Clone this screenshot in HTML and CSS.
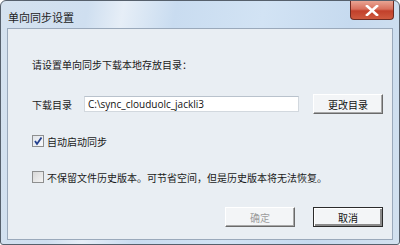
FILE: index.html
```html
<!DOCTYPE html>
<html>
    <head>
        <meta charset="utf-8" >
        <title>单向同步设置</title>
        <link rel="stylesheet" href="styles.css">
    </head>
    <body>
        <div class="window">
            <div class="titlebar">
                <span class="title">单向同步设置</span>
                <div class="close">
                    <svg width="14" height="11" viewBox="0 0 14 11"><path d="M2 1 L12 10 M12 1 L2 10" stroke="#fff" stroke-width="2.6" stroke-linecap="square"/></svg>
                </div>
            </div>
            <div class="client">
                <div class="prompt">请设置单向同步下载本地存放目录：</div>
                <div class="dir-row">
                    <span class="dir-label">下载目录</span>
                    <div class="dir-input">C:\sync_clouduolc_jackli3</div>
                    <button class="btn">更改目录</button>
                </div>
                <label class="check-row first">
                    <span class="check checked">
                        <svg width="10" height="10" viewBox="0 0 10 10"><path d="M2 5 L4 8 L8.5 1.5" stroke="#23408e" stroke-width="1.8" fill="none"/></svg>
                    </span>
                    <span>自动启动同步</span>
                </label>
                <label class="check-row second">
                    <span class="check"></span>
                    <span>不保留文件历史版本。可节省空间，但是历史版本将无法恢复。</span>
                </label>
                <div class="footer">
                    <button class="btn disabled">确定</button>
                    <button class="btn default">取消</button>
                </div>
            </div>
        </div>
    </body>
</html>
```

FILE: styles.css
```css
body {
    margin: 0;
    background-color: #ffffff;
}
.window {
    width: 400px;
    height: 245px;
    box-sizing: border-box;
    border: 1px solid #56606c;
    border-radius: 6px 6px 3px 3px;
    padding: 0 6px 4px 6px;
    display: flex;
    flex-direction: column;
    background: linear-gradient(100deg, #d5e2ef 0%, #cfdff0 20%, #e6eef7 28%, #c9dcf0 40%, #d2e3f4 60%, #c6daef 80%, #d3e1ef 100%);
    font-family: "Noto Sans CJK SC", "Microsoft YaHei", sans-serif;
}
.titlebar {
    height: 27px;
    display: flex;
    justify-content: space-between;
    align-items: flex-start;
}
.title {
    font-size: 11px;
    color: #222;
    padding-left: 1px;
    margin-top: 9px;
    line-height: 14px;
}
.close {
    width: 44px;
    height: 19px;
    margin-right: -1px;
    box-sizing: border-box;
    border: 1px solid #6e2b22;
    border-top: none;
    border-radius: 0 0 4px 4px;
    background: linear-gradient(#e8a493 0%, #d8705c 45%, #c2402b 55%, #cf5a3f 100%);
    display: flex;
    justify-content: center;
    align-items: center;
}
.client {
    flex: 1;
    border: 1px solid #9aa9bb;
    background-color: #e9eef3;
    padding: 29px 9px 0 24px;
    display: flex;
    flex-direction: column;
    font-size: 10px;
    color: #1a1a1a;
}
.prompt {
    line-height: 14px;
}
.dir-row {
    margin-top: 22px;
    display: flex;
    align-items: center;
    height: 20px;
}
.dir-label {
    width: 52px;
}
.dir-input {
    width: 215px;
    height: 16px;
    box-sizing: border-box;
    background-color: #ffffff;
    border: 1px solid #d2d8de;
    border-top-color: #b9c2cc;
    font-family: "Open Sans", sans-serif;
    font-size: 10px;
    line-height: 14px;
    padding-left: 3px;
    color: #111;
}
.dir-row .btn {
    margin-left: auto;
}
.btn {
    width: 70px;
    height: 20px;
    box-sizing: border-box;
    font-family: "Noto Sans CJK SC", sans-serif;
    font-size: 10px;
    color: #111;
    background-color: #f3f5f7;
    border: 1px solid;
    border-color: #ffffff #6a6a6a #6a6a6a #ffffff;
    box-shadow: inset -1px -1px #a8a8a8;
    padding: 0;
}
.btn.disabled {
    color: #9c9c9c;
}
.btn.default {
    border-color: #2b2b2b;
    box-shadow: inset 1px 1px #ffffff, inset -2px -2px #8a8a8a;
}
.check-row {
    display: flex;
    align-items: center;
    height: 14px;
}
.check-row.first {
    margin-top: 20px;
}
.check-row.second {
    margin-top: 22px;
}
.check {
    width: 12px;
    height: 12px;
    box-sizing: border-box;
    border: 1px solid #8e8f8f;
    background: linear-gradient(135deg, #d8d8d8, #f4f4f4);
    margin-right: 3px;
    display: flex;
    justify-content: center;
    align-items: center;
}
.check.checked {
    background: linear-gradient(135deg, #e0e4ea, #f8f9fb);
}
.footer {
    margin-top: 23px;
    display: flex;
    justify-content: flex-end;
    gap: 18px;
}
```
